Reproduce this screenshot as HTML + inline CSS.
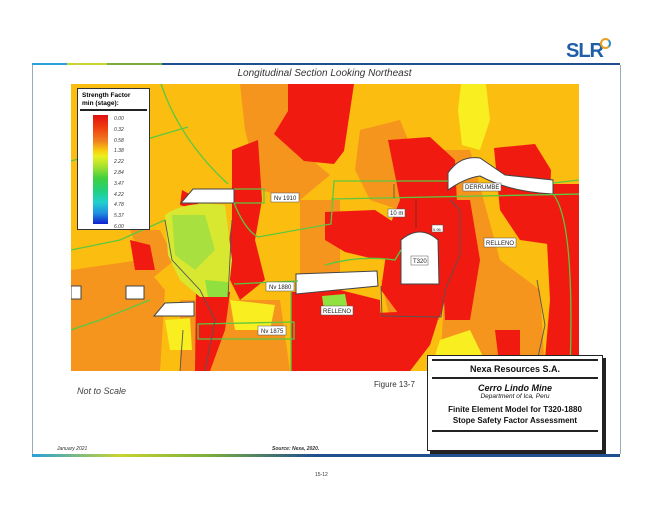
<!DOCTYPE html>
<html><head><meta charset="utf-8"><style>
body{margin:0;width:649px;height:508px;background:#fff;position:relative;overflow:hidden;font-family:"Liberation Sans",sans-serif}
.a{position:absolute}
</style></head><body>
<div class="a" style="left:566px;top:40px;font:bold 20px 'Liberation Sans';color:#1f5fa8;letter-spacing:-1px">SLR</div>
<div class="a" style="left:600px;top:38px;width:7px;height:7px;border:2px solid #e8a020;border-radius:50%;border-right-color:#2a8fd0"></div>
<div class="a" style="left:32px;top:63px;width:35px;height:2px;background:#2aa0d8"></div>
<div class="a" style="left:67px;top:63px;width:40px;height:2px;background:#c8d430"></div>
<div class="a" style="left:107px;top:63px;width:55px;height:2px;background:#7aae3c"></div>
<div class="a" style="left:162px;top:63px;width:458px;height:2px;background:#1f4f8f"></div>
<div class="a" style="left:32px;top:65px;width:587px;height:389px;border-left:1px solid #9ab;border-right:1px solid #9ab"></div>
<div class="a" style="left:32px;top:454px;width:588px;height:3px;background:linear-gradient(90deg,#2aa0d8 0,#c8d430 15%,#7aae3c 30%,#1f4f8f 48%,#1f4f8f 100%)"></div>
<div class="a" style="left:0;width:649px;top:68px;text-align:center;font:italic 10px 'Liberation Sans';color:#333">Longitudinal Section Looking Northeast</div>
<svg class="a" style="left:71px;top:84px" width="508" height="287" viewBox="71 84 508 287">
<rect x="71" y="84" width="508" height="287" fill="#fbbd10"/>
<g fill="#f5951e">
<path d="M240 84 L290 84 L300 150 L330 175 L300 200 L260 190 L245 130Z"/>
<path d="M360 130 L400 120 L420 170 L400 210 L370 200 L355 170Z"/>
<path d="M300 200 L340 200 L340 290 L300 280Z"/>
<path d="M71 270 L140 260 L165 290 L160 371 L71 371Z"/>
<path d="M130 230 L160 230 L175 260 L150 280Z"/>
<path d="M440 150 L470 150 L500 260 L540 290 L545 371 L440 371 L445 280Z"/>
<path d="M180 300 L280 300 L290 371 L180 371Z"/>
<path d="M381 280 L430 280 L440 320 L390 320Z"/>
</g>
<g fill="#f01a10">
<path d="M288 84 L354 84 L344 151 L334 164 L304 161 L274 134 L288 111Z"/>
<path d="M232 150 L258 140 L262 200 L255 240 L265 280 L240 300 L225 270 L232 220Z"/>
<path d="M196 290 L230 292 L225 330 L210 371 L195 371Z"/>
<path d="M291 292 L340 290 L380 300 L382 371 L291 371Z"/>
<path d="M325 212 L375 210 L398 225 L398 260 L370 258 L345 252 L325 240Z"/>
<path d="M388 140 L430 137 L455 160 L458 224 L445 300 L440 317 L401 317 L381 290 L390 225 L400 200 Z"/>
<path d="M354 314 L441 310 L430 345 L410 371 L354 371Z"/>
<path d="M494 148 L535 144 L551 170 L548 244 L520 240 L500 210Z"/>
<path d="M544 184 L579 184 L579 371 L544 371 L550 300Z"/>
<path d="M440 200 L470 200 L480 260 L470 320 L445 320Z"/>
<path d="M182 190 L200 200 L195 210 L180 205Z"/>
<path d="M130 240 L150 245 L155 270 L135 270Z"/>
<path d="M495 330 L520 330 L520 371 L500 371Z"/>
</g>
<g fill="#f8ee20">
<path d="M461 84 L486 84 L490 120 L480 150 L462 145 L458 110Z"/>
<path d="M165 320 L190 318 L192 350 L170 350Z"/>
<path d="M230 300 L275 305 L270 330 L235 330Z"/>
<path d="M440 340 L470 330 L490 371 L430 371Z"/>
</g>
<path d="M165 215 Q185 200 225 205 L232 260 L228 297 L200 297 L180 280 L168 255Z" fill="#d8e830"/>
<path d="M172 215 L205 215 L215 250 L195 270 L175 255Z" fill="#a8e040"/>
<path d="M205 280 L228 282 L228 297 L208 297Z" fill="#90e040"/>
<path d="M322 296 L345 294 L348 310 L324 310Z" fill="#90e040"/>
<g fill="#fff" stroke="#444" stroke-width="1">
<path d="M193 189 L234 189 L234 203 L181 203Z"/>
<path d="M296 274 L377 271 L378 286 L296 294Z"/>
<path d="M401 240 Q420 224 438 240 L439 284 L401 284Z"/>
<path d="M448 173 Q460 155 480 158 L505 175 L553 180 L553 194 Q510 192 480 176 Q465 178 448 190Z"/>
<path d="M165 303 L194 302 L194 316 L154 316Z"/>
<path d="M126 286 L144 286 L144 299 L126 299Z"/>
<path d="M71 286 L81 286 L81 299 L71 299Z"/>
</g>
<g fill="none" stroke="#5cc840" stroke-width="1.3">
<path d="M161 84 Q180 140 228 184"/>
<path d="M71 161 L110 150 L188 127"/>
<path d="M234 189 L264 189 L264 203 L234 203"/>
<path d="M234 203 Q245 230 258 237 L331 224 L334 181 L448 181"/>
<path d="M331 199 L581 194"/>
<path d="M234 284 L298 281"/>
<path d="M198 324 L294 322 L294 339 L198 339Z"/>
<path d="M291 292 L291 371"/>
<path d="M325 265 Q360 255 395 260 L401 250"/>
<path d="M553 194 Q575 220 570 371"/>
<path d="M71 250 L120 240 L165 220"/>
<path d="M71 330 L100 320 L150 300"/>
<path d="M553 183 L579 180"/>
</g>
<g fill="none" stroke="#555" stroke-width="0.9">
<path d="M165 220 L172 260 L200 290 L215 320 L205 371"/>
<path d="M232 220 L228 297"/>
<path d="M381 286 L382 316 L441 317 L445 290 L460 255 L460 210 L450 200"/>
<path d="M537 280 L545 325 L535 371"/>
<path d="M183 330 L180 371"/>
</g>
<g font-size="6" fill="#222" font-family="Liberation Sans">
<rect x="271" y="193" width="28" height="9" fill="#fff" stroke="#555" stroke-width=".5"/><text x="274" y="200">Nv 1910</text>
<rect x="388" y="209" width="17" height="8" fill="#fff" stroke="#555" stroke-width=".5"/><text x="390" y="215">10 m</text>
<rect x="411" y="256" width="17" height="9" fill="#fff" stroke="#555" stroke-width=".5"/><text x="413" y="263">T320</text>
<rect x="463" y="183" width="38" height="8" fill="#fff" stroke="#555" stroke-width=".5"/><text x="465" y="189">DERRUMBE</text>
<rect x="484" y="238" width="32" height="9" fill="#fff" stroke="#555" stroke-width=".5"/><text x="486" y="245">RELLENO</text>
<rect x="266" y="282" width="28" height="9" fill="#fff" stroke="#555" stroke-width=".5"/><text x="269" y="289">Nv 1880</text>
<rect x="321" y="306" width="32" height="9" fill="#fff" stroke="#555" stroke-width=".5"/><text x="323" y="313">RELLENO</text>
<rect x="258" y="326" width="28" height="9" fill="#fff" stroke="#555" stroke-width=".5"/><text x="261" y="333">Nv 1875</text>
<rect x="432" y="225" width="11" height="7" fill="#fff" stroke="#555" stroke-width=".5"/><text x="433" y="231" font-size="4">0.96</text>
</g>
<path d="M394 184 L394 198 M416 199 L416 228" stroke="#333" stroke-width=".6"/>
</svg>
<div class="a" style="left:77px;top:88px;width:71px;height:140px;background:#fff;border:1px solid #333">
<div style="font:bold 6.5px 'Liberation Sans';margin:3px 0 0 4px;line-height:8px">Strength Factor<br>min (stage):</div>
<div style="margin:1px 2px;height:2px;background:#222"></div>
<div style="position:absolute;left:15px;top:26px;width:15px;height:109px;background:linear-gradient(#e01010,#f04010 12%,#f08020 24%,#f8d010 33%,#e8f020 38%,#a0e030 48%,#40d040 58%,#20d080 70%,#20d0d0 80%,#2090e0 90%,#1020d0)"></div>
<div style="position:absolute;left:36px;top:25px;font:italic 5px 'Liberation Sans';line-height:10.8px;color:#333">0.00<br>0.32<br>0.58<br>1.38<br>2.22<br>2.84<br>3.47<br>4.22<br>4.78<br>5.37<br>6.00</div>
</div>
<div class="a" style="left:77px;top:386px;font:italic 9px 'Liberation Sans';color:#444">Not to Scale</div>
<div class="a" style="left:374px;top:380px;font:8px 'Liberation Sans';color:#333">Figure 13-7</div>
<div class="a" style="left:427px;top:355px;width:174px;height:94px;background:#fff;border:1px solid #222;box-shadow:3px 3px 0 #222;text-align:center;color:#111">
<div style="margin:3px 4px 0;border-top:2px solid #222"></div>
<div style="font:bold 9px 'Liberation Sans';margin:3px 0">Nexa Resources S.A.</div>
<div style="margin:0 4px;border-top:2px solid #222"></div>
<div style="font:bold italic 9px 'Liberation Sans';margin-top:4px">Cerro Lindo Mine</div>
<div style="font:italic 6.5px 'Liberation Sans'">Department of Ica, Peru</div>
<div style="font:bold 8px 'Liberation Sans';margin-top:4px;line-height:11px">Finite Element Model for T320-1880<br>Stope Safety Factor Assessment</div>
<div style="margin:4px 4px 0;border-top:2px solid #222"></div>
</div>
<div class="a" style="left:57px;top:446px;font:italic 5px 'Liberation Sans';color:#333">January 2021</div>
<div class="a" style="left:272px;top:446px;font:bold italic 5px 'Liberation Sans';color:#333">Source: Nexa, 2020.</div>
<div class="a" style="left:315px;top:472px;font:5px 'Liberation Sans';color:#333">15-12</div>
</body></html>
